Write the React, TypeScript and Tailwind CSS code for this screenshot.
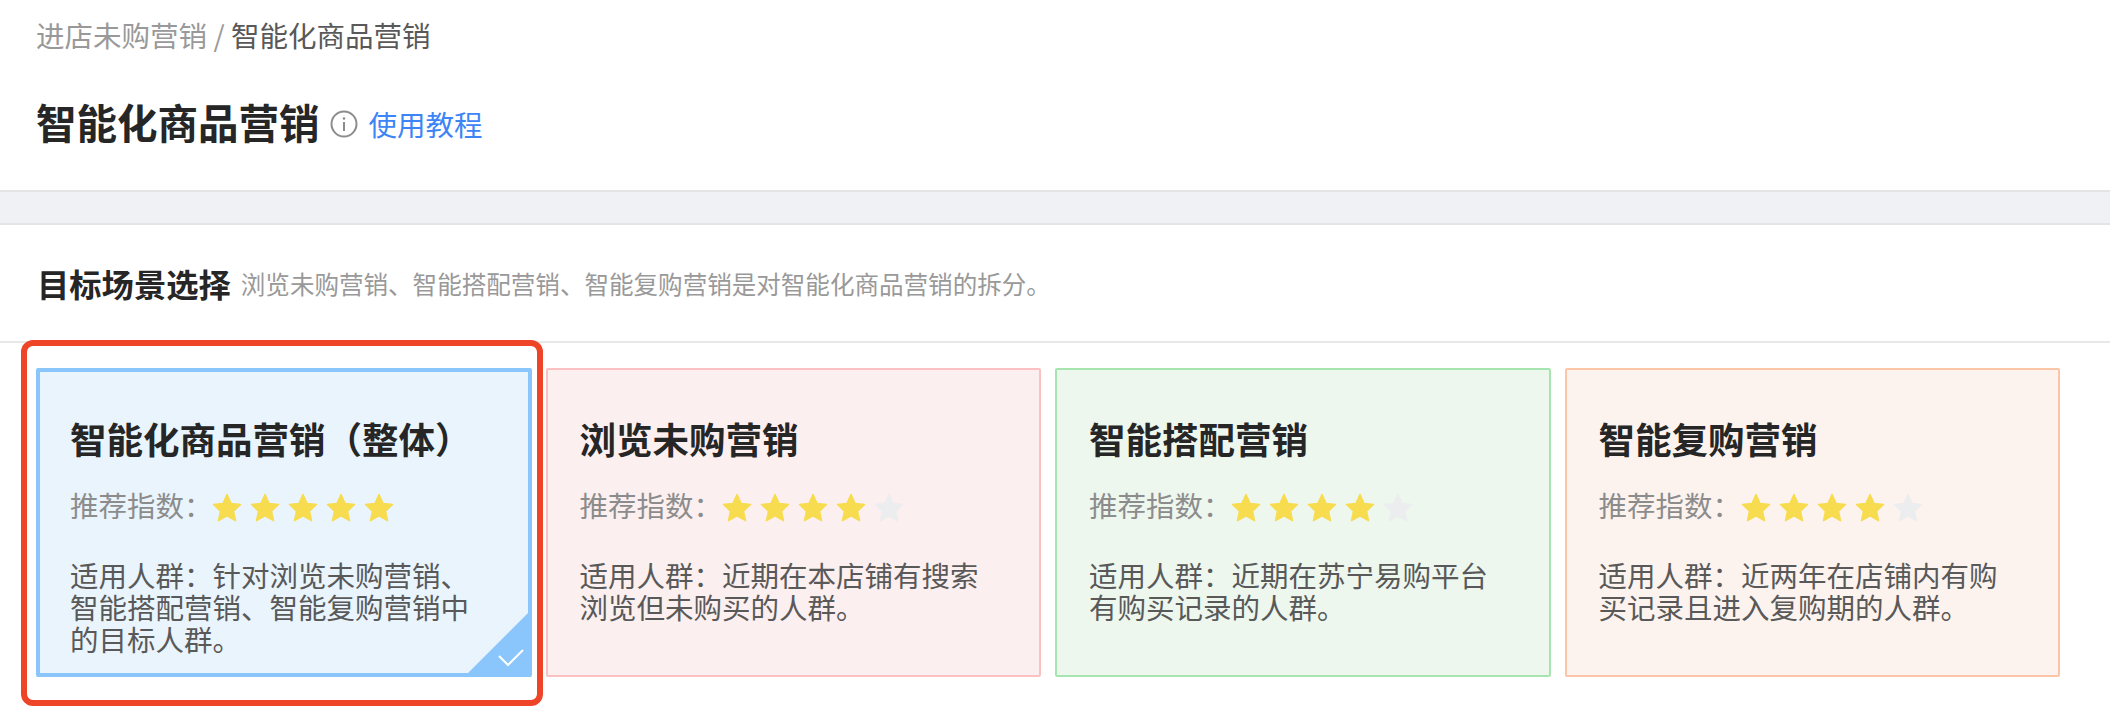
const font = { fontFamily: '"Noto Sans CJK SC", "Liberation Sans", sans-serif' };

function Star({ on }: { on: boolean }) {
  return (
    <svg width="30" height="30" viewBox="0 0 30 30" className="shrink-0">
      <path
        d="M15 1.5l4.1 9 9.4 1-7 6.6 2 9.6L15 22.8l-8.5 4.9 2-9.6-7-6.6 9.4-1z"
        fill={on ? "#f7dc4f" : "#ebedee"}
        stroke={on ? "#f7dc4f" : "#ebedee"}
        strokeWidth="1.5"
        strokeLinejoin="round"
      />
    </svg>
  );
}

type CardProps = {
  title: string;
  stars: number;
  desc: string;
  cls: string;
  selected?: boolean;
};

function Card({ title, stars, desc, cls, selected }: CardProps) {
  return (
    <div className={`relative w-[495.5px] h-[309px] rounded-[2px] ${cls} ${selected ? "pl-[30px] pt-[41.5px]" : "pl-[32px] pt-[43.5px]"}`}>
      <div className="text-[36.5px] leading-[50px] font-semibold text-[#262626]">{title}</div>
      <div className="mt-[22px] flex items-center h-[40px] text-[28.5px] text-[#8c8c8c]">
        <span className="w-[142px] shrink-0 whitespace-nowrap leading-[40px] -mt-[1px]">推荐指数：</span>
        <div className="flex gap-[8px] mt-[4px]">
          {[0, 1, 2, 3, 4].map((i) => (
            <Star key={i} on={i < stars} />
          ))}
        </div>
      </div>
      <p className="mt-[33.5px] w-[405px] text-[28.5px] leading-[32px] text-[#595959]">{desc}</p>
      {selected && (
        <div className="absolute right-0 bottom-0 w-[60px] h-[60px] overflow-hidden">
          <svg width="60" height="60" viewBox="0 0 60 60">
            <path d="M60 0V60H0z" fill="#8ac6fb" />
            <path d="M31 43l9 9 15-15" fill="none" stroke="#fff" strokeWidth="2" />
          </svg>
        </div>
      )}
    </div>
  );
}

export default function App() {
  return (
    <div style={font} className="relative w-[2110px] h-[708px] overflow-hidden bg-white">
      <header className="h-[190px] pl-[36px] pt-[15px]">
        <div className="text-[28.5px] leading-[40px] text-[#999999]">
          进店未购营销 <span>/</span> <span className="text-[#595959]">智能化商品营销</span>
        </div>
        <div className="mt-[39px] flex items-center h-[56px]">
          <h1 className="text-[40.5px] leading-[56px] font-semibold text-[#262626]">智能化商品营销</h1>
          <svg width="28" height="28" viewBox="0 0 28 28" className="ml-[10px] mt-[4px]">
            <circle cx="14" cy="14" r="12.5" fill="none" stroke="#8c8c8c" strokeWidth="2" />
            <circle cx="14" cy="8.5" r="1.3" fill="#8c8c8c" />
            <path d="M14 12v9" stroke="#8c8c8c" strokeWidth="2" />
          </svg>
          <a className="ml-[11px] mt-[4px] text-[28.5px] leading-[40px] text-[#3d84f7]">使用教程</a>
        </div>
      </header>
      <div className="h-[35px] bg-[#f0f1f5] border-y-[2px] border-[#e4e4e6]" />
      <section className="h-[118px] pl-[37px] pt-[35px] border-b-[2px] border-[#e8e8e8] flex items-start">
        <h2 className="text-[32.3px] leading-[46px] font-semibold text-[#262626]">目标场景选择</h2>
        <span className="ml-[10px] mt-[7px] text-[24.55px] leading-[34px] text-[#999999]">
          浏览未购营销、智能搭配营销、智能复购营销是对智能化商品营销的拆分。
        </span>
      </section>
      <div className="flex gap-[14px] pl-[36px] pt-[25px]">
        <Card
          selected
          title="智能化商品营销（整体）"
          stars={5}
          desc="适用人群：针对浏览未购营销、智能搭配营销、智能复购营销中的目标人群。"
          cls="bg-[#e9f4fd] border-[4px] border-[#8ac6fb]"
        />
        <Card
          title="浏览未购营销"
          stars={4}
          desc="适用人群：近期在本店铺有搜索浏览但未购买的人群。"
          cls="bg-[#fcefef] border-[2px] border-[#fbc0c0]"
        />
        <Card
          title="智能搭配营销"
          stars={4}
          desc="适用人群：近期在苏宁易购平台有购买记录的人群。"
          cls="bg-[#edf7ee] border-[2px] border-[#a6e5b0]"
        />
        <Card
          title="智能复购营销"
          stars={4}
          desc="适用人群：近两年在店铺内有购买记录且进入复购期的人群。"
          cls="bg-[#fcf3ef] border-[2px] border-[#fbc5a8]"
        />
      </div>
      <div className="absolute left-[21px] top-[340px] w-[522px] h-[366px] border-[6px] border-[#ee4428] rounded-[12px] pointer-events-none" />
    </div>
  );
}
